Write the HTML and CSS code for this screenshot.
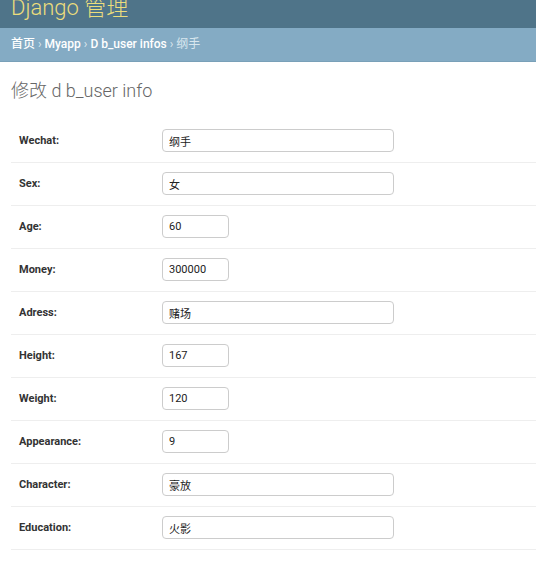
FILE: index.html
```html
<!DOCTYPE html>
<html lang="zh">
<head>
<meta charset="utf-8">
<link rel="stylesheet" href="styles.css">
</head>
<body>
<div class="header"><h1 class="brand">Django 管理</h1></div>
<div class="breadcrumbs"><a href="#">首页</a> › <a href="#">Myapp</a> › <a href="#">D b_user infos</a> › <span class="current">纲手</span></div>
<div class="content">
  <h2 class="title">修改 d b_user info</h2>
  <form class="form">
    <div class="row"><label>Wechat:</label><input class="wide" value="纲手"></div>
    <div class="row"><label>Sex:</label><input class="wide" value="女"></div>
    <div class="row"><label>Age:</label><input class="short" value="60"></div>
    <div class="row"><label>Money:</label><input class="short" value="300000"></div>
    <div class="row"><label>Adress:</label><input class="wide" value="赌场"></div>
    <div class="row"><label>Height:</label><input class="short" value="167"></div>
    <div class="row"><label>Weight:</label><input class="short" value="120"></div>
    <div class="row"><label>Appearance:</label><input class="short" value="9"></div>
    <div class="row"><label>Character:</label><input class="wide" value="豪放"></div>
    <div class="row"><label>Education:</label><input class="wide" value="火影"></div>
  </form>
</div>
</body>
</html>
```
FILE: styles.css
```css
html, body {
  margin: 0;
  padding: 0;
  background: #fff;
  font-family: Roboto, "Noto Sans CJK SC", sans-serif;
  overflow: hidden;
}
.header {
  height: 28px;
  background: #4f7489;
  padding: 0 11px;
  box-sizing: border-box;
}
.brand {
  margin: 0;
  font-size: 22px;
  line-height: 16px;
  font-weight: 300;
  color: #ecdd7c;
}
.breadcrumbs {
  height: 34px;
  box-sizing: border-box;
  background: #84abc4;
  border-bottom: 1px solid #79a0b8;
  padding: 0 11px;
  line-height: 33px;
  font-size: 12px;
  color: #dbe8ef;
}
.breadcrumbs a {
  color: #fff;
  text-decoration: none;
  font-weight: 500;
}
.breadcrumbs .current {
  color: #d7e6ee;
}
.content {
  padding: 0 0 0 11px;
}
.title {
  margin: 17px 0 17px;
  font-size: 18px;
  line-height: 24px;
  font-weight: 300;
  color: #666;
}
.form {
  margin: 0;
}
.row {
  display: flex;
  align-items: center;
  padding: 9px 8px 10px;
  border-bottom: 1px solid #eee;
}
.row label {
  width: 143px;
  flex: none;
  font-size: 11px;
  font-weight: 700;
  color: #333;
}
.row input {
  box-sizing: border-box;
  height: 23px;
  border: 1px solid #ccc;
  border-radius: 4px;
  padding: 0 6px;
  font-family: Roboto, "Noto Sans CJK SC", sans-serif;
  font-size: 11px;
  color: #222;
  background: #fff;
  margin: 0;
}
.row input.wide {
  width: 232px;
}
.row input.short {
  width: 67px;
}
```
